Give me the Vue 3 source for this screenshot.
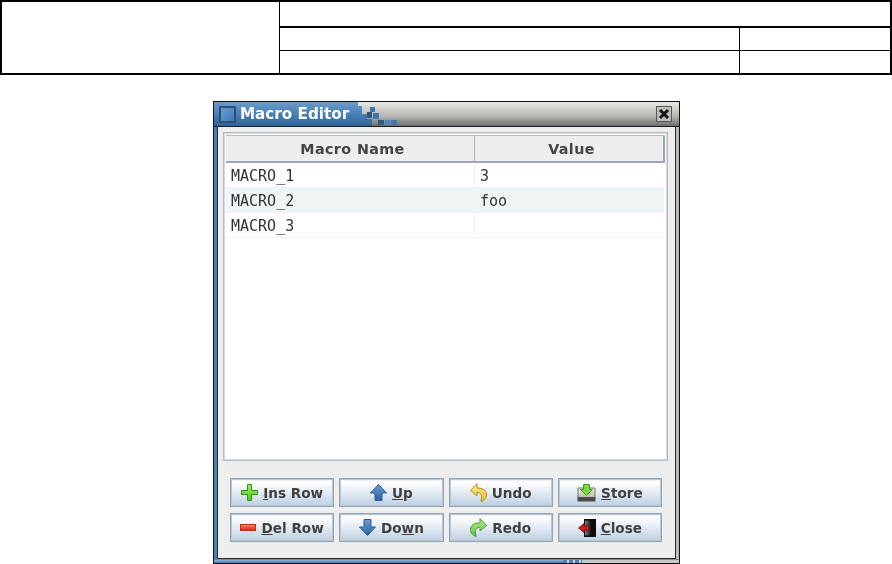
<script setup>
const rows = [
  { name: 'MACRO_1', value: '3' },
  { name: 'MACRO_2', value: 'foo' },
  { name: 'MACRO_3', value: '' },
]
const buttons = [
  { icon: 'plus', pre: '', key: 'I', post: 'ns Row' },
  { icon: 'up', pre: '', key: 'U', post: 'p' },
  { icon: 'undo', pre: 'Undo', key: '', post: '' },
  { icon: 'store', pre: '', key: 'S', post: 'tore' },
  { icon: 'minus', pre: '', key: 'D', post: 'el Row' },
  { icon: 'down', pre: 'Do', key: 'w', post: 'n' },
  { icon: 'redo', pre: 'Redo', key: '', post: '' },
  { icon: 'close', pre: '', key: 'C', post: 'lose' },
]
const dither = [
  { x: 13, y: 5, w: 5, h: 5, c: '#3f78ad' },
  { x: 10, y: 10, w: 5, h: 6, c: '#34597f' },
  { x: 16, y: 11, w: 6, h: 6, c: '#3f78ad' },
  { x: 21, y: 18, w: 6, h: 5, c: '#34597f' },
  { x: 28, y: 18, w: 5, h: 5, c: '#4c86bd' },
  { x: 34, y: 18, w: 6, h: 5, c: '#3f78ad' },
]
</script>

<template>
  <div class="page">
    <div class="sheet">
      <div class="sheet-left"></div>
      <div class="sheet-right">
        <div class="sheet-head"></div>
        <div class="sheet-row first"><div class="sheet-a"></div><div class="sheet-b"></div></div>
        <div class="sheet-row"><div class="sheet-a"></div><div class="sheet-b"></div></div>
      </div>
    </div>

    <div class="window">
      <div class="titlebar">
        <div class="title-blue">
          <span class="title-icon"></span>
          <span class="title-text">Macro Editor</span>
        </div>
        <svg class="title-dither" width="41" height="24" viewBox="0 0 41 24">
          <defs><linearGradient id="gt" x1="0" y1="0" x2="0" y2="1"><stop offset="0" stop-color="#6c9ccb" /><stop offset=".45" stop-color="#4b83b9" /><stop offset="1" stop-color="#2f6497" /></linearGradient></defs>
          <path d="M0 0H1V4H5V12H10V17H15V24H0Z" fill="url(#gt)" />
          <rect v-for="(d, i) in dither" :key="i" :x="d.x" :y="d.y" :width="d.w" :height="d.h" :fill="d.c" />
        </svg>
        <div class="title-gray">
          <span class="close-box">
            <svg width="14" height="14" viewBox="0 0 14 14"><path d="M3 3L11 11M11 3L3 11" stroke="#111" stroke-width="3" /></svg>
          </span>
        </div>
      </div>

      <div class="body">
        <div class="table-panel">
          <div class="table-head">
            <div class="th th-name">Macro Name</div>
            <div class="th th-value">Value</div>
          </div>
          <div v-for="(r, i) in rows" :key="r.name" class="tr" :class="{ alt: i === 1 }">
            <div class="td td-name">{{ r.name }}</div>
            <div class="td td-value">{{ r.value }}</div>
          </div>
        </div>

        <div class="buttons">
          <button v-for="b in buttons" :key="b.icon" class="btn" type="button">
            <svg v-if="b.icon === 'plus'" class="ic" width="17" height="17" viewBox="0 0 17 17">
              <defs><linearGradient id="gp" x1="0" y1="0" x2="0" y2="1"><stop offset="0" stop-color="#a6ee5a" /><stop offset="1" stop-color="#58c81e" /></linearGradient></defs>
              <path d="M6.5 .5H10.5V6.5H16.5V10.5H10.5V16.5H6.5V10.5H.5V6.5H6.5Z" fill="url(#gp)" stroke="#2f8f20" />
            </svg>
            <svg v-else-if="b.icon === 'minus'" class="ic" width="16" height="17" viewBox="0 0 16 17">
              <defs><linearGradient id="gm" x1="0" y1="0" x2="0" y2="1"><stop offset="0" stop-color="#ef8a5c" /><stop offset="1" stop-color="#d62a12" /></linearGradient></defs>
              <rect x=".5" y="5.5" width="15" height="6" fill="url(#gm)" stroke="#b8321c" />
            </svg>
            <svg v-else-if="b.icon === 'up'" class="ic" width="17" height="17" viewBox="0 0 17 17">
              <defs><linearGradient id="gu" x1="0" y1="0" x2="0" y2="1"><stop offset="0" stop-color="#6b9dd2" /><stop offset="1" stop-color="#2d62a4" /></linearGradient></defs>
              <path d="M8.5 .5L16.5 9H12V16.5H5V9H.5Z" fill="url(#gu)" stroke="#2a5c98" />
            </svg>
            <svg v-else-if="b.icon === 'down'" class="ic" width="17" height="17" viewBox="0 0 17 17">
              <defs><linearGradient id="gd" x1="0" y1="0" x2="0" y2="1"><stop offset="0" stop-color="#6b9dd2" /><stop offset="1" stop-color="#2d62a4" /></linearGradient></defs>
              <path d="M8.5 16.5L16.5 8H12V.5H5V8H.5Z" fill="url(#gd)" stroke="#2a5c98" />
            </svg>
            <svg v-else-if="b.icon === 'undo'" class="ic" width="17" height="19" viewBox="0 0 17 19">
              <defs><linearGradient id="gy" x1="0" y1="0" x2="0" y2="1"><stop offset="0" stop-color="#fbe98c" /><stop offset="1" stop-color="#e8c22c" /></linearGradient></defs>
              <path d="M7 .5L.5 7.5L7 13V9.5C10.5 9.5 12 11 11.5 15L11 18.5C15 17.5 16.5 14 16.5 11.5C16.5 7 12.5 5 7 5Z" fill="url(#gy)" stroke="#b09220" />
            </svg>
            <svg v-else-if="b.icon === 'redo'" class="ic" width="17" height="19" viewBox="0 0 17 19">
              <defs><linearGradient id="gr" x1="0" y1="0" x2="0" y2="1"><stop offset="0" stop-color="#bdf08e" /><stop offset="1" stop-color="#5cc236" /></linearGradient></defs>
              <path d="M10 .5L16.5 7.5L10 13V9.5C6.5 9.5 5 11 5.5 15L6 18.5C2 17.5 .5 14 .5 11.5C.5 7 4.5 5 10 5Z" fill="url(#gr)" stroke="#4c9a32" />
            </svg>
            <svg v-else-if="b.icon === 'store'" class="ic" width="19" height="18" viewBox="0 0 19 18">
              <defs><linearGradient id="gs" x1="0" y1="0" x2="0" y2="1"><stop offset="0" stop-color="#f2f2ec" /><stop offset="1" stop-color="#b8b8ac" /></linearGradient></defs>
              <path d="M1 4H18V14H1Z" fill="url(#gs)" stroke="#77776e" />
              <rect x=".5" y="13" width="18" height="4.5" fill="#4a4a46" />
              <path d="M6.5 .5H12.5V5.5H15.5L9.5 11.5L3.5 5.5H6.5Z" fill="#7ed640" stroke="#3f9c2c" />
            </svg>
            <svg v-else class="ic" width="18" height="18" viewBox="0 0 18 18">
              <defs><linearGradient id="gc" x1="0" y1="0" x2="1" y2="0"><stop offset="0" stop-color="#777" /><stop offset="1" stop-color="#111" /></linearGradient></defs>
              <rect x="6" y="0" width="12" height="18" fill="#0c0c0c" />
              <path d="M7 1.5H13L13 16.5H7Z" fill="url(#gc)" />
              <path d="M0.5 9L6 4.5V7H11V11H6V13.5Z" fill="#d01a1a" stroke="#7e0e0e" stroke-width=".8" />
            </svg>
            <span class="label">{{ b.pre }}<u v-if="b.key">{{ b.key }}</u>{{ b.post }}</span>
          </button>
        </div>
      </div>

      <div class="bottom-edge">
        <div class="edge-blue"></div>
        <div class="edge-dots"></div>
        <div class="edge-gray"></div>
      </div>
    </div>
  </div>
</template>

<style scoped>
.page {
  width: 892px;
  height: 564px;
  overflow: hidden;
  background: #fff;
  font-family: "DejaVu Sans", sans-serif;
}
.sheet {
  box-sizing: border-box;
  width: 892px;
  height: 75px;
  border: 2px solid #000;
  display: flex;
}
.sheet-left {
  width: 277px;
  border-right: 1px solid #000;
}
.sheet-right {
  flex: 1;
  display: flex;
  flex-direction: column;
}
.sheet-head {
  height: 24px;
  border-bottom: 2px solid #000;
}
.sheet-row {
  flex: 1;
  display: flex;
}
.sheet-row.first {
  border-bottom: 1px solid #000;
}
.sheet-a {
  width: 459px;
  border-right: 1px solid #000;
}
.sheet-b {
  flex: 1;
}
.window {
  box-sizing: border-box;
  width: 467px;
  height: 463px;
  margin: 26px 0 0 213px;
  border: 1px solid #111;
  display: flex;
  flex-direction: column;
  background: linear-gradient(90deg, #4b83b9 0 20px, #b8b8b8 20px);
  filter: blur(.35px);
}
.titlebar {
  height: 25px;
  flex: none;
  display: flex;
  border-bottom: 1px solid #1c1c1c;
  box-sizing: border-box;
}
.title-blue {
  width: 143px;
  display: flex;
  align-items: center;
  padding-left: 5px;
  gap: 4px;
  box-sizing: border-box;
  background: linear-gradient(#6c9ccb, #4b83b9 45%, #2f6497);
}
.title-icon {
  box-sizing: border-box;
  flex: none;
  width: 17px;
  height: 17px;
  background: linear-gradient(135deg, #6a9ed2, #3f7ab5);
  border: 2px solid #2a4f78;
  border-radius: 1px;
}
.title-text {
  color: #fff;
  font-size: 15.2px;
  font-weight: 700;
  line-height: 24px;
  white-space: nowrap;
}
.title-dither {
  flex: none;
  display: block;
  background: linear-gradient(#e8e8e4, #b5b5b1 60%, #6e6e6c);
}
.title-gray {
  flex: 1;
  display: flex;
  align-items: center;
  justify-content: flex-end;
  padding-right: 7px;
  background: linear-gradient(#e8e8e4, #b5b5b1 60%, #6e6e6c);
}
.close-box {
  box-sizing: border-box;
  width: 16px;
  height: 16px;
  display: flex;
  align-items: center;
  justify-content: center;
  border: 1px solid #555;
  background: #bdbdbb;
}
.body {
  box-sizing: border-box;
  height: 432px;
  flex: none;
  margin: 0 3px;
  border: 1px solid #2a2a2a;
  border-top: none;
  background: #eeeeee;
  padding: 5px 6px 0 5px;
  display: flex;
  flex-direction: column;
}
.table-panel {
  box-sizing: border-box;
  width: 445px;
  height: 329px;
  flex: none;
  border: 1px solid #b4bcc2;
  outline: 1px solid #d5d8da;
  outline-offset: -2px;
  padding: 2px;
  background: #fff;
}
.table-head {
  display: flex;
  height: 28px;
  box-sizing: border-box;
  background: #eeeeee;
  border-bottom: 2px solid #9aa4b6;
  border-top: 1px solid #b0b8c4;
  color: #444;
  font-size: 14.3px;
  font-weight: 700;
}
.th {
  box-sizing: border-box;
  display: flex;
  align-items: center;
  justify-content: center;
  letter-spacing: .4px;
}
.th-name {
  width: 249px;
  padding-left: 5px;
  border-right: 1px solid #a9b2be;
}
.th-value {
  width: 190px;
  padding-left: 5px;
  border-right: 2px solid #9aa4b6;
}
.tr {
  display: flex;
  height: 25px;
  box-sizing: border-box;
  border-bottom: 1px solid #eef3f3;
  font-family: "DejaVu Sans Mono", monospace;
  font-size: 15px;
  color: #333;
  width: 438px;
}
.tr.alt {
  background: #eff4f4;
}
.td {
  display: flex;
  align-items: center;
  padding: 1px 0 0 5px;
  box-sizing: border-box;
}
.td-name {
  width: 249px;
  border-right: 1px solid #eef3f3;
}
.td-value {
  flex: 1;
}
.buttons {
  margin: 17px 0 0 7px;
  width: 432px;
  display: grid;
  grid-template-columns: repeat(4, 1fr);
  grid-auto-rows: 29px;
  column-gap: 5px;
  row-gap: 6px;
}
.btn {
  box-sizing: border-box;
  margin: 0;
  padding: 0;
  display: flex;
  align-items: center;
  justify-content: center;
  gap: 5px;
  border: 1px solid #8fa3b5;
  outline: 1px solid #b9c7d3;
  outline-offset: -2px;
  background: linear-gradient(#e2ebf3, #ffffff 12%, #dfe8f1 55%, #bccfe2);
  font-family: "DejaVu Sans", sans-serif;
  font-size: 13.6px;
  font-weight: 700;
  color: #404040;
}
.ic {
  flex: none;
  display: block;
}
.label {
  white-space: nowrap;
}
.bottom-edge {
  flex: 1;
  display: flex;
  min-height: 3px;
  border-top: 1px solid #8a8a8a;
}
.edge-blue {
  width: 349px;
  background: linear-gradient(#8fb6dc, #3c78b4);
}
.edge-dots {
  width: 19px;
  background: repeating-linear-gradient(90deg, #4a7fb2 0 4px, #c9d6e2 4px 6px);
}
.edge-gray {
  flex: 1;
  background: #c8c8c8;
}
</style>
